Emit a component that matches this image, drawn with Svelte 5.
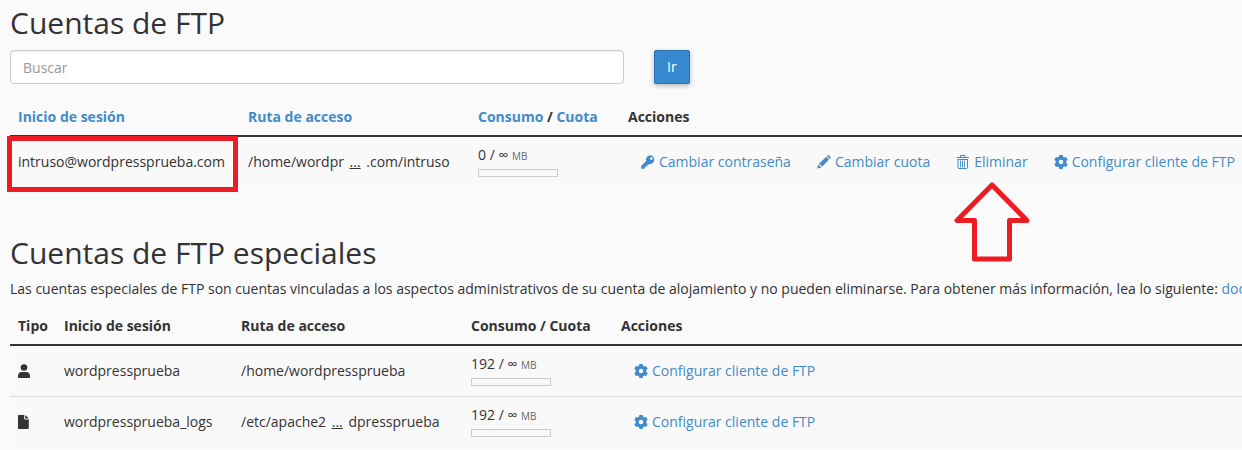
<script lang="ts">
	let search = '';

	const actions = [
		{ icon: 'key', label: 'Cambiar contraseña' },
		{ icon: 'pencil', label: 'Cambiar cuota' },
		{ icon: 'trash', label: 'Eliminar', marked: true },
		{ icon: 'cog', label: 'Configurar cliente de FTP' }
	];

	const accounts = [
		{ login: 'intruso@wordpressprueba.com', start: '/home/wordpr', end: '.com/intruso', used: 0, marked: true }
	];

	const special = [
		{ type: 'user', login: 'wordpressprueba', start: '/home/wordpressprueba', end: '', used: 192 },
		{ type: 'file', login: 'wordpressprueba_logs', start: '/etc/apache2', end: 'dpressprueba', used: 192 }
	];

	function handleSearch() {
		search = search.trim();
	}
</script>

{#snippet icon(name)}
	<svg class="icon" viewBox="0 0 14 14" aria-hidden="true">
		{#if name === 'key'}
			<path fill-rule="evenodd" d="M9.4 0.2a4.5 4.5 0 0 0-4.3 5.8L0.2 10.9v2.4c0 .3.2.5.5.5h2.4c.3 0 .6-.2.6-.5v-1.2h1.2c.3 0 .5-.2.5-.5v-1.2h1.1c.2 0 .4-.1.5-.2l1-1.1A4.5 4.5 0 1 0 9.4.2zM10.4 2.3a1.3 1.3 0 1 1 0 2.6 1.3 1.3 0 0 1 0-2.6z" />
		{:else if name === 'pencil'}
			<path d="M1.2 9.6 0.2 13.6 4.2 12.7 2.9 10.9zM1.9 8.9 9.2 1.8 12 4.6 4.8 11.9 3.9 9.9zM9.9 1.1l.8-.8c.3-.3.7-.3 1 0l1.9 1.9c.3.3.3.7 0 1l-.8.8z" />
		{:else if name === 'trash'}
			<g fill="none" stroke="currentColor">
				<path d="M0.500 2.500h12.500M4.500 2.500v-2h4.500v2M1.500 4.500h10.500M2 4.500v8q0 1 1 1h7.500q1 0 1-1v-8" />
				<path d="M4.500 5.500v7M6.500 5.500v7M8.500 5.500v7" stroke-width="0.900" />
			</g>
		{:else if name === 'cog'}
			<path fill-rule="evenodd" d="M5.3 0h3.4l.3 1.7 1.3.8 1.700-.6 1.700 2.900L12.300 5.900v2.200l1.400 1.100-1.700 2.900-1.700-.6-1.300.8L8.700 14H5.300l-.3-1.700-1.300-.8-1.700.6L.3 9.200l1.400-1.100V5.900L.3 4.800 2 1.900l1.700.6 1.300-.8zM7 4.700a2.300 2.300 0 1 0 0 4.600 2.300 2.300 0 0 0 0-4.600z" />
		{:else if name === 'user'}
			<circle cx="6" cy="3.5" r="3.3" />
			<path d="M0 13.2v-1.500C0 9.400 1.600 8 3.700 8h4.600c2.100 0 3.700 1.400 3.700 3.700v1.500c0 .5-.3.8-.8.8H.8c-.5 0-.8-.3-.8-.8z" />
		{:else}
			<path d="M.8 0h5.400v3.800c0 .4.3.7.7.7h3.900v8.700c0 .5-.3.8-.8.8H.8c-.5 0-.8-.3-.8-.8V.8C0 .3.3 0 .8 0zM7.200 0l3.600 3.600H7.200z" />
		{/if}
	</svg>
{/snippet}

{#snippet path(row)}
	{row.start}{#if row.end}&nbsp;<abbr title="{row.start}…{row.end}">...</abbr>&nbsp;{row.end}{/if}
{/snippet}

{#snippet quota(used)}
	<div>{used} / ∞ <small>MB</small></div>
	<div class="bar"></div>
{/snippet}

<main>
	<h2>Cuentas de FTP</h2>

	<form class="search" on:submit|preventDefault={handleSearch}>
		<input type="text" placeholder="Buscar" aria-label="Buscar" bind:value={search} />
		<button type="submit" class="btn-go">Ir</button>
	</form>

	<table class="accounts">
		<thead>
			<tr>
				<th class="col-path"><a href="#login">Inicio de sesión</a></th>
				<th class="col-path"><a href="#path">Ruta de acceso</a></th>
				<th class="col-quota"><a href="#usage">Consumo</a> / <a href="#quota">Cuota</a></th>
				<th>Acciones</th>
			</tr>
		</thead>
		<tbody>
			{#each accounts as row}
				<tr>
					<td class:marked={row.marked}>{row.login}</td>
					<td>{@render path(row)}</td>
					<td>{@render quota(row.used)}</td>
					<td>
						<div class="actions">
							{#each actions as action}
								<button type="button" class="btn-link">
									{@render icon(action.icon)}
									{action.label}
									{#if action.marked}
										<svg class="arrow" viewBox="0 0 76 80" aria-hidden="true">
											<path d="M38 3 3 38.500H20.500V77H55.500V38.500H73z" />
										</svg>
									{/if}
								</button>
							{/each}
						</div>
					</td>
				</tr>
			{/each}
		</tbody>
	</table>

	<h2>Cuentas de FTP especiales</h2>
	<p>
		Las cuentas especiales de FTP son cuentas vinculadas a los aspectos administrativos de su cuenta de alojamiento y no pueden eliminarse. Para obtener más información, lea lo siguiente: <a href="#docs">documentación</a>
	</p>

	<table>
		<thead>
			<tr>
				<th class="col-type">Tipo</th>
				<th class="col-login">Inicio de sesión</th>
				<th class="col-path">Ruta de acceso</th>
				<th class="col-quota">Consumo / Cuota</th>
				<th>Acciones</th>
			</tr>
		</thead>
		<tbody>
			{#each special as row}
				<tr>
					<td>{@render icon(row.type)}</td>
					<td>{row.login}</td>
					<td>{@render path(row)}</td>
					<td>{@render quota(row.used)}</td>
					<td>
						<div class="actions">
							<button type="button" class="btn-link">
								{@render icon('cog')}
								Configurar cliente de FTP
							</button>
						</div>
					</td>
				</tr>
			{/each}
		</tbody>
	</table>
</main>

<style>
	:global(body) {
		background: #fafafa;
	}

	main {
		padding: 6px 0 0 10px;
		overflow: hidden;
		font-family: 'Open Sans', sans-serif;
		font-size: 14px;
		line-height: 20px;
		color: #333;
		white-space: nowrap;
	}

	h2 {
		margin: 0 0 10px;
		font-size: 30px;
		font-weight: 400;
		line-height: 33px;
	}

	p {
		margin: 0 0 9px;
	}

	a {
		color: #428bca;
		text-decoration: none;
	}

	.search {
		display: flex;
		gap: 30px;
		margin: 0 0 15px;
		padding: 1px 4px 0 0;
	}

	.search input {
		box-sizing: border-box;
		width: 50%;
		height: 34px;
		padding: 6px 12px;
		border: 1px solid #ccc;
		border-radius: 4px;
		background: #fff;
		box-shadow: inset 0 1px 1px rgba(0, 0, 0, 0.075);
		font: inherit;
		color: #555;
	}

	.search input::placeholder {
		color: #999;
		opacity: 1;
	}

	.btn-go {
		height: 34px;
		padding: 0 12px;
		border: 1px solid #2a6fb0;
		border-radius: 2px;
		background: #3789d0;
		box-shadow: 0 2px 5px rgba(0, 0, 0, 0.26);
		font: inherit;
		color: #fff;
		cursor: pointer;
	}

	table {
		width: 100%;
		border-spacing: 0;
	}

	.accounts {
		margin-bottom: 49px;
	}

	th {
		padding: 8px;
		border-bottom: 2px solid #333;
		font-weight: 700;
		text-align: left;
	}

	td {
		padding: 8px;
		background: #f9f9f9;
		vertical-align: middle;
	}

	tr + tr td {
		border-top: 1px solid #ddd;
	}

	.col-type {
		width: 30px;
		min-width: 30px;
	}

	.col-login {
		width: 161px;
		min-width: 161px;
	}

	.col-path {
		width: 214px;
		min-width: 214px;
	}

	.col-quota {
		width: 134px;
		min-width: 134px;
	}

	.marked {
		position: relative;
	}

	.marked::after {
		content: '';
		position: absolute;
		inset: -1px 2px -5px -3px;
		border: 5px solid #ed1c24;
	}

	abbr {
		margin: 0 2px;
		text-decoration: underline;
	}

	small {
		font-size: 10px;
		line-height: 10px;
		color: #666;
	}

	.bar {
		box-sizing: border-box;
		width: 80px;
		height: 8px;
		margin: 4px 0 2px;
		border: 1px solid #ccc;
	}

	.actions {
		display: flex;
	}

	.btn-link {
		position: relative;
		display: flex;
		align-items: center;
		gap: 4px;
		padding: 0 12px;
		border: 1px solid transparent;
		background: none;
		font: inherit;
		color: #428bca;
		cursor: pointer;
	}

	.icon {
		display: block;
		flex: none;
		width: 14px;
		height: 14px;
		fill: currentColor;
	}

	.arrow {
		position: absolute;
		top: 30px;
		left: 50%;
		width: 76px;
		height: 80px;
		margin-left: -38px;
		fill: none;
		stroke: #ed1c24;
		stroke-width: 5;
		stroke-linejoin: round;
	}
</style>
